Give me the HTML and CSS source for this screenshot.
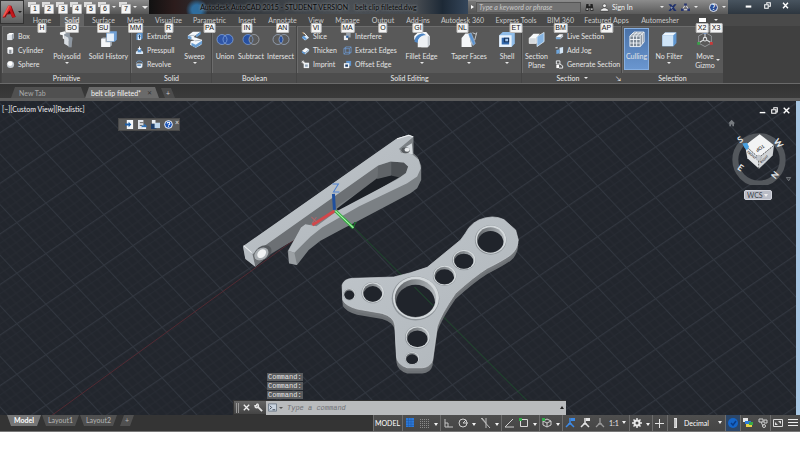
FILE: index.html
```html
<!DOCTYPE html>
<html lang="en">
<head>
  <meta charset="UTF-8">
  <meta name="viewport" content="width=device-width, initial-scale=1.0">
  <title>Autodesk AutoCAD 2015 - belt clip filleted.dwg</title>
  <link rel="stylesheet" href="styles.css">
</head>
<body>

  <!-- Shared icon shapes -->
  <svg class="defs" width="0" height="0" aria-hidden="true">
    <symbol id="i-box" viewBox="0 0 20 20"><path fill="#fff" d="M3 5l5-3h9v12l-4 4H3z"/><path fill="#dfe3e8" d="M3 6h10v12H3z"/><path fill="#9aa3ad" d="M13 6l4-4v12l-4 4z"/></symbol>
    <symbol id="i-cyl" viewBox="0 0 20 20"><path fill="#e9ecef" d="M3 5v10c0 4 13 4 13 0V5z"/><path fill="#8d949b" d="M7 8h5v9H7z"/><ellipse cx="9.500" cy="5" rx="6.500" ry="3" fill="#fff"/></symbol>
    <symbol id="i-sphere" viewBox="0 0 20 20"><circle cx="10" cy="10" r="8" fill="#c3c9d0"/><circle cx="9" cy="8" r="5.500" fill="#fff"/></symbol>
    <symbol id="i-extrude" viewBox="0 0 20 20"><path fill="#5d93cc" d="M3 5l4-3h10v12l-4 4H3z"/><path fill="#dbeaf8" d="M6 6h7v12H6z"/><path fill="#1c3c5e" d="M9 15V10H7l3-4 3 4h-2v5z"/></symbol>
    <symbol id="i-press" viewBox="0 0 20 20"><path fill="#dce9f6" d="M2 13l4-3h8l4 3v5H2z"/><path fill="#5d93cc" d="M6 5h8v9H6z"/><path fill="#fff" d="M9 1h2v4h3l-4 4-4-4h3z"/></symbol>
    <symbol id="i-revolve" viewBox="0 0 20 20"><path fill="#e3edf7" d="M3 8h14l-1 8c-3 3-9 3-12 0z"/><path fill="none" stroke="#6fa3d8" stroke-width="2" d="M3 6c2-5 11-5 14 0"/><path fill="#4a7fb8" d="M5 10h8v3H5z"/></symbol>
    <symbol id="i-slice" viewBox="0 0 20 20"><path fill="#dbe9f6" d="M2 12l10-5 6 6-9 6z"/><path fill="#5f9ad8" d="M5 8l8 7-3 3-8-5z"/><path stroke="#fff" stroke-width="2" d="M6 1l8 9"/><path stroke="#e0a860" stroke-width="2" d="M3 1l4 4"/></symbol>
    <symbol id="i-thick" viewBox="0 0 20 20"><path fill="#f4f7fa" d="M2 11l9-7 7 3-9 8z"/><path fill="#5f9ad8" d="M2 11l7 4v4l-7-4z"/><path fill="#b9d2ea" d="M9 15l9-8v4l-9 8z"/></symbol>
    <symbol id="i-imprint" viewBox="0 0 20 20"><path fill="#edf1f5" d="M6 6h12v12H6z"/><path fill="#8da0b4" d="M9 10h6v5H9z"/><path stroke="#fff" stroke-width="1.500" d="M5 1v8M1 5h8M2 2l6 6"/></symbol>
    <symbol id="i-interfere" viewBox="0 0 20 20"><path fill="#9aa2ab" d="M7 2h10v10H7z"/><path fill="#e8ebef" d="M2 8h9v10H2z"/><path fill="#2f5f9c" d="M7 8h5v5H7z"/></symbol>
    <symbol id="i-edges" viewBox="0 0 20 20"><path fill="none" stroke="#6fa0dc" stroke-width="1.500" d="M2 6h12v12H2zM6 2h12v12H6zM2 6l4-4M14 6l4-4M14 18l4-4M2 18l4-4"/></symbol>
    <symbol id="i-offset" viewBox="0 0 20 20"><path fill="#5f93cc" d="M7 2h11v11H7z"/><path fill="#f1f4f7" d="M2 7h12v11H2z"/><path fill="#1f3f68" d="M5 10h6v5H5z"/></symbol>
    <symbol id="i-live" viewBox="0 0 20 20"><path fill="#f4f6f8" d="M2 11l8-6h8l-6 7H2z"/><path fill="#7badde" d="M2 12h10v4H2z"/><path fill="#c5ccd4" d="M12 12l6-7v5l-6 6z"/></symbol>
    <symbol id="i-jog" viewBox="0 0 20 20"><path fill="#d5e6f6" d="M10 4l8-2v13l-8 3z"/><path fill="#6da5dc" d="M3 9l7-2v9l-7 2z"/><path fill="#fff" d="M1 3h5v2H1z"/></symbol>
    <symbol id="i-gen" viewBox="0 0 20 20"><path fill="none" stroke="#f2f4f6" stroke-width="2" d="M3 2h8v7H3zM11 9l6 4v5H9"/><path fill="#fff" d="M3 11h6v7H3z"/></symbol>

    <symbol id="b-poly" viewBox="0 0 48 48"><path fill="#f2f4f6" d="M4 4l14-3 6 3v12l12 6v24l-8-3V28L12 21v-9l-8-2z"/><path fill="#8d96a0" d="M18 1l14 5v9l8 4-4 27-8 0V24l-12-5V9l8-4z"/><path fill="#d8dde2" d="M16 13l12 6v24l-12-7z"/></symbol>
    <symbol id="b-history" viewBox="0 0 48 48"><path fill="#6f9fd4" d="M16 6l6-5h24v24l-6 5H16z"/><path fill="#e6f0fa" d="M18 7h20v22H18z"/><path fill="#a9b0b8" d="M2 22l5-4h11v12h14v10l-5 5H2z"/><path fill="#f5f7f9" d="M2 22h12v10h13v13H2z"/></symbol>
    <symbol id="b-sweep" viewBox="0 0 48 48"><path fill="#f4f8fc" d="M4 13L18 2h22L26 12l-6 5 24 8-2 14-16 8-16-8 2-10 12-3L4 22z"/><path fill="#6c9fd2" d="M4 13l10 3 0 8L4 21zM26 12l14-10v7L28 18zM14 33l12 6v8l-12-6zM26 39l18-12v9L26 47z"/><path fill="none" stroke="#3a4d60" d="M8 13l15-1M24 28l16-2"/></symbol>
    <symbol id="b-union" viewBox="0 0 54 36"><circle cx="18" cy="18" r="15" fill="#2f55a6"/><circle cx="36" cy="18" r="15" fill="#2f55a6"/><g fill="none" stroke="#8cb0ea" stroke-width="2"><circle cx="18" cy="18" r="15"/><circle cx="36" cy="18" r="15"/></g></symbol>
    <symbol id="b-sub" viewBox="0 0 54 36"><circle cx="18" cy="18" r="15" fill="#2750a0" stroke="#7ea6e6" stroke-width="2"/><circle cx="36" cy="18" r="15" fill="#5a5a5a" stroke="#b4bac2" stroke-width="2"/><path fill="none" stroke="#7ea6e6" stroke-width="2" d="M27 6a15 15 0 0 1 0 24"/></symbol>
    <symbol id="b-inter" viewBox="0 0 54 36"><path fill="#2750a0" d="M27 6a15 15 0 0 1 0 24 15 15 0 0 1 0-24"/><g fill="none" stroke="#a8b8d0" stroke-width="2"><circle cx="18" cy="18" r="15"/><circle cx="36" cy="18" r="15"/></g></symbol>
    <symbol id="b-fillet" viewBox="0 0 48 48"><path fill="#f6f8fa" d="M2 14L14 3h22l10 12v24l-6 7H22V32L2 24z"/><path fill="#4f86c4" d="M3 30C3 14 16 7 28 7l8 5C22 12 12 20 12 34z"/><path fill="#eef1f4" d="M12 34c0-14 10-22 24-22l4 4v30H12z"/><path fill="#c5cbd1" d="M40 15h6v24l-6 7z"/></symbol>
    <symbol id="b-taper" viewBox="0 0 48 48"><path fill="#f4f6f8" d="M3 20L14 7h10l8 38H3z"/><path fill="#b4bbc3" d="M24 7l10 30-2 8z"/><path fill="#5c93cf" stroke="#dcecfb" d="M22 9l8-4 12 30-6 6z"/><path fill="none" stroke="#eef2f6" stroke-width="2" d="M34 5l10 4M46 4L40 26"/></symbol>
    <symbol id="b-shell" viewBox="0 0 48 48"><path fill="#8fbce8" d="M2 12L12 3h34v32l-9 10H2z"/><path fill="#eaf3fc" d="M2 12h35v33H2z"/><path fill="#3268ac" d="M9 19h21v19H9z"/><path fill="#16345e" d="M15 19h15v13H15z"/><path fill="#a4c8ee" d="M19 22h8v7h-8z"/></symbol>
    <symbol id="b-plane" viewBox="0 0 48 48"><path fill="#f7f9fa" d="M2 20L14 8h18L22 20z"/><path fill="#d5dade" d="M2 20h20v15H2z"/><path fill="#86b4e2" stroke="#e8f3fd" stroke-width="2" d="M24 16L44 4v26L24 44z"/><path fill="none" stroke="#fff" stroke-width="2" d="M2 20h20v15H2z"/></symbol>
    <symbol id="b-cull" viewBox="0 0 48 48"><path fill="#7b8794" d="M4 14L16 3h28v28L33 44H4z"/><path fill="none" stroke="#f4f7fa" stroke-width="2.500" d="M4 14h29v30H4zM4 14L16 3h28v28L33 44M33 14L44 3M14 14v30M23 14v30M4 24h29M4 34h29M10 8h29v28M24 3L14 14M34 3L23 14"/></symbol>
    <symbol id="b-filter" viewBox="0 0 48 48"><path fill="#5e95cf" d="M5 12l8-8h32v30l-8 9H5z"/><path fill="#cfe4f7" d="M5 12h31v31H5z"/><path fill="#eef6fd" d="M5 12l8-8h32l-9 8z"/></symbol>
    <symbol id="b-gizmo" viewBox="0 0 48 48"><path fill="none" stroke="#a9adb1" stroke-width="2" d="M24 4l18 10v20L24 44 6 34V14z"/><path fill="none" stroke="#d9dcdf" stroke-width="3" d="M24 4v14M6 34l12-8M42 34l-12-8"/><circle cx="24" cy="23" r="5" fill="none" stroke="#dfe2e4" stroke-width="3"/><path fill="#4e86d6" d="M19 7l5-6 5 6z"/><path fill="#3aa04a" d="M2 31h8v8H2z"/><path fill="#c83a3a" d="M38 31h8v8h-8z"/></symbol>

    <symbol id="s-grid" viewBox="0 0 10 10"><path fill="#2d79d8" d="M1 0h8v9H1z"/><path stroke="#1c56a4" stroke-width=".5" d="M3.500 0v9M6 0v9M1 2.500h8M1 5h8M1 7.500h8"/></symbol>
    <symbol id="s-dots" viewBox="0 0 10 10"><path stroke="#8a8a8a" stroke-dasharray="1 1" d="M0 1.500h10M0 3.500h10M0 5.500h10M0 7.500h10M0 9.500h10"/></symbol>
    <symbol id="s-ortho" viewBox="0 0 10 10"><path fill="none" stroke="#c4c4c4" d="M2 1v8h8M2 5h3v4"/></symbol>
    <symbol id="s-polar" viewBox="0 0 10 10"><circle cx="5" cy="5" r="4" fill="none" stroke="#cfcfcf"/><path fill="none" stroke="#cfcfcf" d="M5 5h5M5 5l3-3"/></symbol>
    <symbol id="s-iso" viewBox="0 0 10 10"><path stroke="#bdbdbd" d="M0 0l9 10M5 0v10M1 0l4 5"/></symbol>
    <symbol id="s-track" viewBox="0 0 10 10"><path fill="none" stroke="#cfcfcf" d="M9 1L1 9h9"/></symbol>
    <symbol id="s-snap" viewBox="0 0 10 10"><path fill="none" stroke="#d6d6d6" d="M1.500 1.500h7v7h-7z"/><path fill="#30a848" d="M0 0h3v3H0z"/></symbol>
    <symbol id="s-cube" viewBox="0 0 10 10"><path fill="none" stroke="#cfcfcf" d="M5 1l4 2v4L5 9 1 7V3zM1 3l4 2 4-2M5 5v4"/><path fill="#30a848" d="M0 0h3v3H0z"/></symbol>
    <symbol id="s-man" viewBox="0 0 10 10"><path fill="none" stroke="currentColor" stroke-width="1.500" d="M5 0v5L1 9M5 5l4 4M3 6h4"/><path fill="currentColor" d="M6 0h4v3H6z"/></symbol>
    <symbol id="s-man2" viewBox="0 0 10 10"><path fill="none" stroke="currentColor" stroke-width="1.300" d="M5 0v5L1 9M5 5l4 4M3 6h4"/></symbol>
    <symbol id="s-gear" viewBox="0 0 10 10"><circle cx="5" cy="5" r="2.500" fill="none" stroke="#e8e8e8" stroke-width="2"/><path stroke="#e8e8e8" stroke-width="1.500" d="M5 0v2M5 8v2M0 5h2M8 5h2M1.500 1.500l1.500 1.500M7 7l1.500 1.500M8.500 1.500L7 3M3 7L1.500 8.500"/></symbol>
    <symbol id="s-plus" viewBox="0 0 10 10"><path stroke="#e2e2e2" d="M4.500 1v9M0 5.500h9"/></symbol>
    <symbol id="s-ruler" viewBox="0 0 10 10"><path fill="#e0e0e0" d="M4 0h3v10H4z"/><path stroke="#777" stroke-width=".5" d="M4 2h2M4 4h2M4 6h2M4 8h2"/></symbol>
    <symbol id="s-hw" viewBox="0 0 10 10"><circle cx="5" cy="5" r="5" fill="#1565c8"/><path fill="none" stroke="#0b3c86" stroke-width="1.500" d="M3 5l2 2 3-4"/></symbol>
    <symbol id="s-iso2" viewBox="0 0 10 10"><path fill="#e6e6e6" d="M0 0h5v4H0z"/><path fill="#2d79d8" d="M2 3h6v3H2z"/><path fill="#e8d048" d="M3 6h6v3H3z"/><path fill="#38a848" d="M6 4h4v3H6z"/></symbol>
    <symbol id="s-obj" viewBox="0 0 10 10"><path fill="none" stroke="#d0d0d0" d="M1 1h4v3H1zM6 2h3v3H6zM3 4l2 4"/><circle cx="6" cy="8" r="1.500" fill="none" stroke="#d0d0d0"/></symbol>
    <symbol id="s-clean" viewBox="0 0 10 10"><path fill="none" stroke="#dadada" d="M.5 1.500h9v7h-9z"/><path fill="#dadada" d="M5 3h3v3zM2 4v3h3z"/></symbol>
    <symbol id="s-menu" viewBox="0 0 10 10"><path stroke="#eee" d="M0 1.500h10M0 4.500h10M0 7.500h10"/></symbol>
  </svg>

  <div class="app">

    <!-- Title bar and ribbon tabs -->
    <header class="header">
      <button class="app-button" aria-label="Application menu">
        <svg viewBox="0 0 48 44"><path fill="#8f0d10" d="M20 2h10l14 36-11 2-5-11-12 1-4 9-10 1z"/><path fill="#e3262b" d="M20 2h8l3 12-18 14-9 10H2z"/><path fill="#f05a50" d="M20 2h5L8 36H2z"/><path fill="#c5171c" d="M28 10l14 28-9 1-10-20z"/><path fill="#3a0d0e" d="M23 17l5 9-9 1z"/></svg>
        <span class="caret"></span>
      </button>
      <div class="header-main">
        <div class="titlebar">
          <div class="quick-access">
            <button aria-label="New"><kbd>1</kbd></button>
            <button aria-label="Open"><kbd>2</kbd></button>
            <button aria-label="Save"><kbd>3</kbd></button>
            <button aria-label="Save as"><kbd>4</kbd></button>
            <button aria-label="Plot"><kbd>5</kbd></button>
            <button aria-label="Undo"><kbd>6</kbd></button>
            <span class="caret"></span>
            <button aria-label="Redo"><kbd>7</kbd></button>
            <span class="caret"></span>
            <span class="caret customize"></span>
          </div>
          <div class="window-title"><span>Autodesk AutoCAD 2015 - STUDENT VERSION</span><span>belt clip filleted.dwg</span></div>
          <div class="info-center">
            <button class="info-arrow" aria-label="Collapse search"></button>
            <input class="search" type="text" placeholder="Type a keyword or phrase" aria-label="Search">
            <svg class="info-icon" viewBox="0 0 20 20"><path fill="#222" d="M3 2h5v5h4V2h5l2 15h-7v-6H8v6H1z"/><path fill="#ddd" d="M3 12h4v3H3zM13 12h4v3h-4z"/></svg>
            <button class="sign-in"><svg class="info-icon" viewBox="0 0 20 20"><circle cx="10" cy="6" r="4" fill="#eee" stroke="#222"/><path fill="#eee" stroke="#222" d="M1 18c0-6 5-5 7-7h4c2 2 7 1 7 7z"/></svg>Sign In</button>
            <span class="caret"></span>
            <svg class="info-icon" viewBox="0 0 20 20"><path fill="#1d2f6b" d="M1 3h6l3 4 4-4h5l-6 7 6 8h-6l-3-5-4 5H1l6-8z"/><path fill="#dce4f2" d="M8 8l2 2-3 4z"/></svg>
            <svg class="info-icon" viewBox="0 0 20 20"><path fill="none" stroke="#e8e8f4" stroke-width="2" d="M10 3L3 15h14z"/><path fill="#27356e" d="M7 1h6v5H7zM0 12h6v6H0zM14 12h6v6h-6z"/></svg>
            <span class="caret"></span>
            <button class="help" aria-label="Help">?</button>
            <span class="caret"></span>
          </div>
          <div class="window-controls">
            <button aria-label="Minimize"><svg viewBox="0 0 10 10"><path fill="#fff" d="M1 5h8v3H1z"/></svg></button>
            <button aria-label="Restore"><svg viewBox="0 0 10 10"><path fill="none" stroke="#fff" stroke-width="1.500" d="M1 4h5v5H1zM4 3V1h5v5H7"/></svg></button>
            <button aria-label="Close"><svg viewBox="0 0 10 10"><path stroke="#fff" stroke-width="2" d="M1.500 1l7 8M8.500 1l-7 8"/></svg></button>
          </div>
        </div>
        <nav class="ribbon-tabs">
          <a href="#">Home<kbd>H</kbd></a>
          <a href="#" class="active">Solid<kbd>SO</kbd></a>
          <a href="#">Surface<kbd>SU</kbd></a>
          <a href="#">Mesh<kbd>MM</kbd></a>
          <a href="#">Visualize<kbd>R</kbd></a>
          <a href="#">Parametric<kbd>PA</kbd></a>
          <a href="#">Insert<kbd>IN</kbd></a>
          <a href="#">Annotate<kbd>AN</kbd></a>
          <a href="#">View<kbd>VI</kbd></a>
          <a href="#">Manage<kbd>MA</kbd></a>
          <a href="#">Output<kbd>O</kbd></a>
          <a href="#">Add-ins<kbd>GI</kbd></a>
          <a href="#">Autodesk 360<kbd>NL</kbd></a>
          <a href="#">Express Tools<kbd>ET</kbd></a>
          <a href="#">BIM 360<kbd>BM</kbd></a>
          <a href="#">Featured Apps<kbd>AP</kbd></a>
          <a href="#">Automesher</a>
          <button class="ribbon-state first" aria-label="Minimize ribbon"><i></i><kbd>X2</kbd></button>
          <button class="ribbon-state" aria-label="Ribbon options"><span class="caret"></span><kbd>X3</kbd></button>
        </nav>
      </div>
    </header>

    <!-- Ribbon panels -->
    <div class="ribbon">
      <section class="panel primitive">
        <div class="tools">
          <div class="list">
            <button><svg><use href="#i-box"/></svg>Box</button>
            <button><svg><use href="#i-cyl"/></svg>Cylinder</button>
            <button><svg><use href="#i-sphere"/></svg>Sphere</button>
          </div>
          <button class="big"><svg><use href="#b-poly"/></svg>Polysolid<span class="caret"></span></button>
          <button class="big"><svg><use href="#b-history"/></svg>Solid History</button>
        </div>
        <h2>Primitive</h2>
      </section>
      <section class="panel solid">
        <div class="tools">
          <div class="list">
            <button><svg><use href="#i-extrude"/></svg>Extrude</button>
            <button><svg><use href="#i-press"/></svg>Presspull</button>
            <button><svg><use href="#i-revolve"/></svg>Revolve</button>
          </div>
          <button class="big"><svg><use href="#b-sweep"/></svg>Sweep<span class="caret"></span></button>
        </div>
        <h2>Solid</h2>
      </section>
      <section class="panel boolean">
        <div class="tools">
          <button class="big"><svg><use href="#b-union"/></svg>Union</button>
          <button class="big"><svg><use href="#b-sub"/></svg>Subtract</button>
          <button class="big"><svg><use href="#b-inter"/></svg>Intersect</button>
        </div>
        <h2>Boolean</h2>
      </section>
      <section class="panel editing">
        <div class="tools">
          <div class="list">
            <button><svg><use href="#i-slice"/></svg>Slice</button>
            <button><svg><use href="#i-thick"/></svg>Thicken</button>
            <button><svg><use href="#i-imprint"/></svg>Imprint</button>
          </div>
          <div class="list">
            <button><svg><use href="#i-interfere"/></svg>Interfere</button>
            <button><svg><use href="#i-edges"/></svg>Extract Edges</button>
            <button><svg><use href="#i-offset"/></svg>Offset Edge</button>
          </div>
          <button class="big"><svg><use href="#b-fillet"/></svg>Fillet Edge<span class="caret"></span></button>
          <button class="big"><svg><use href="#b-taper"/></svg>Taper Faces<span class="caret"></span></button>
          <button class="big"><svg><use href="#b-shell"/></svg>Shell<span class="caret"></span></button>
        </div>
        <h2>Solid Editing</h2>
      </section>
      <section class="panel section">
        <div class="tools">
          <button class="big"><svg><use href="#b-plane"/></svg>Section<br>Plane</button>
          <div class="list">
            <button><svg><use href="#i-live"/></svg>Live Section</button>
            <button><svg><use href="#i-jog"/></svg>Add Jog</button>
            <button><svg><use href="#i-gen"/></svg>Generate Section</button>
          </div>
        </div>
        <h2>Section <span class="caret"></span><button class="launcher" aria-label="Section settings">&#8600;</button></h2>
      </section>
      <section class="panel selection">
        <div class="tools">
          <button class="big pressed"><svg><use href="#b-cull"/></svg>Culling</button>
          <button class="big"><svg><use href="#b-filter"/></svg>No Filter<span class="caret"></span></button>
          <button class="big"><svg><use href="#b-gizmo"/></svg>Move<br>Gizmo<span class="caret side"></span></button>
        </div>
        <h2>Selection</h2>
      </section>
    </div>

    <!-- Open drawings -->
    <nav class="file-tabs">
      <a href="#" class="file-tab">New Tab</a>
      <a href="#" class="file-tab current">belt clip filleted*<span class="close">&#10005;</span></a>
      <button class="add-tab" aria-label="New drawing">+</button>
    </nav>

    <!-- Drawing area -->
    <main class="viewport">
      <svg class="drawing" viewBox="0 101 795 314" preserveAspectRatio="xMidYMid slice" role="img" aria-label="Belt clip model">
        <defs>
          <pattern id="grid" width="10" height="10" patternUnits="userSpaceOnUse" patternTransform="matrix(2.9 -1.95 2.9 3.1 335 210)">
            <path fill="none" stroke="#282c34" stroke-width=".2" d="M2 0v10M4 0v10M6 0v10M8 0v10M0 2h10M0 4h10M0 6h10M0 8h10"/>
            <path fill="none" stroke="#31363f" stroke-width=".6" d="M0 0v10M0 0h10"/>
          </pattern>
          <linearGradient id="steel" x1="0" y1="0" x2="1" y2="1">
            <stop offset="0" stop-color="#c1c7cc"/>
            <stop offset="1" stop-color="#aeb4b9"/>
          </linearGradient>
          <linearGradient id="wall" x1="0" y1="0" x2="1" y2="0">
            <stop offset="0" stop-color="#606468"/>
            <stop offset=".6" stop-color="#8f9498"/>
            <stop offset="1" stop-color="#b4b9bd"/>
          </linearGradient>
          <path id="plate" d="M35 240Q40 222 65 220L190 216Q240 205 290 187L390 105Q405 85 415 68Q440 38 485 36Q505 36 520 44L555 75L563 105Q560 135 540 150Q520 165 470 190Q430 215 375 265Q330 330 320 365Q315 400 306 465Q300 486 275 488H230Q200 478 198 455L193 360Q190 335 155 325L80 312Q45 302 37 285Z"/>
          <clipPath id="bore"><circle r=".93"/></clipPath>
          <g id="hole">
            <circle r="1.100" fill="#8f959a"/>
            <circle r="1.060" cx=".02" cy="-.03" fill="#d3d8db"/>
            <circle r=".95" fill="url(#wall)"/>
            <g clip-path="url(#bore)"><circle r=".9" cy=".22" fill="#20242b"/></g>
          </g>
        </defs>
        <rect y="101" width="795" height="314" fill="#22262d"/>
        <rect y="101" width="795" height="314" fill="url(#grid)"/>
        <path stroke="#5e2a33" stroke-width=".8" d="M52 415L335 210"/>

        <!-- clip, side view -->
        <g transform="translate(230 125) scale(.3333)">
          <path fill="#7b8084" d="M38 365L498 42L535 30L549 35V85L562 98L572 122V165L560 190L540 205L380 290L340 310L270 347L235 375L200 420L176 415L172 378L212 308L190 345L120 385L75 425L45 400Z"/>
          <path fill="#6c7074" d="M66 388L443 122L440 165L325 240L300 268L240 298L212 308L190 345L120 388L75 425Z"/>
          <path fill="#b7bdc2" d="M38 362L66 385L75 425L45 402Z"/>
          <path fill="#1c2026" d="M318 252L440 160L482 150L510 155L330 262Z"/>
          <path fill="#606468" d="M443 122L482 110V152L440 162Z"/>
          <path fill="#4c5054" d="M482 110L520 113L533 125L528 142L508 158L482 152Z"/>
          <path fill="url(#steel)" fill-rule="evenodd" d="M40 362L498 42L535 30L549 36L506 72L512 84L545 88L565 105L571 130L560 155L530 175L385 245L275 308L240 335L192 383L174 377L212 308L225 298L258 304L320 258L500 163L526 145L533 125L520 113L480 110L443 122L66 388Z"/>
          <path fill="#9ba0a4" d="M174 377L192 383L200 420L176 415Z"/>
          <ellipse cx="97" cy="384" rx="29" ry="20" fill="#565a5e" transform="rotate(-35 97 384)"/>
          <ellipse cx="93" cy="387" rx="23" ry="17" fill="#a9aeb2" transform="rotate(-35 93 387)"/>
          <ellipse cx="94" cy="386" rx="15" ry="11" fill="#f0f2f3" transform="rotate(-45 94 386)"/>
          <path fill="#d5dade" d="M510 76L544 55L547 88L515 84Z"/>
          <ellipse cx="525" cy="76" rx="13" ry="9" fill="#565a5e"/>
          <ellipse cx="530" cy="75" rx="8" ry="6" fill="#e6e9eb"/>
          <path fill="none" stroke="#eceff1" stroke-width="3" d="M40 362L64 383M500 42L535 31L548 36"/>
        </g>

        <!-- clip, flat plate -->
        <path stroke="#1d5a2c" stroke-width=".8" d="M345 219L541 415"/>
        <g transform="translate(330 205) scale(.3333)">
          <use href="#plate" y="17" fill="#6d7175"/>
          <use href="#plate" y="9" fill="#74787c"/>
          <use href="#plate" fill="url(#steel)" stroke="#cbd0d4" stroke-width="2"/>
          <use href="#hole" transform="translate(57 268) scale(17 17)"/>
          <use href="#hole" transform="translate(127 263) scale(31 29)"/>
          <use href="#hole" transform="translate(255 280) scale(65 60)"/>
          <use href="#hole" transform="translate(342 212) scale(32 28)"/>
          <use href="#hole" transform="translate(400 165) scale(32 28)"/>
          <use href="#hole" transform="translate(480 105) scale(43 40)"/>
          <use href="#hole" transform="translate(261 397) scale(34 31)"/>
          <use href="#hole" transform="translate(245 460) scale(20 18)"/>
          <path stroke="#1f6b30" stroke-width="2" d="M252 246L308 302"/>
        </g>

        <!-- UCS icon -->
        <path stroke="#1f4f9e" stroke-width="3" d="M334 210L333 194"/>
        <path stroke="#d2474b" stroke-width="3" d="M334 211L312 225"/>
        <path stroke="#2fae3c" stroke-width="3" d="M335 211L353 228"/>
        <path stroke="#b4f5b4" d="M335 211L353 228"/>
        <path fill="none" stroke="#4a7ed0" d="M332 184h6l-5 8h6"/>
        <path fill="none" stroke="#b06468" d="M311 217l5 5M316 217l-4 6"/>
        <path fill="none" stroke="#1f6b30" d="M353 226l3-4M354 222v4"/>
      </svg>

      <div class="view-label">[&#8211;][Custom View][Realistic]</div>

      <div class="mini-toolbar">
        <button aria-label="Insert"><svg viewBox="0 0 10 10"><path fill="#f4f6f8" d="M2 0h7v10H2z"/><path fill="#1d5fa8" d="M0 4h4V2l3 3-3 3V6H0z"/></svg></button>
        <button aria-label="Export"><svg viewBox="0 0 10 10"><path fill="#dfe4ea" d="M0 0h6v10H0z"/><path fill="none" stroke="#555" d="M2 3h4M2 6h3"/><path fill="#2a70b8" d="M4 6h3V4l3 3-3 3V8H4z"/><path fill="#eef1f5" d="M5 8h4v2H5z"/></svg></button>
        <button aria-label="Compare"><svg viewBox="0 0 10 10"><path fill="#1d3d68" d="M0 4h6v6H0z"/><path fill="#bcd6ee" d="M4 3h6v6H4z"/><path fill="#e9eef4" d="M1 0h4v4H1z"/></svg></button>
        <button aria-label="Help"><svg viewBox="0 0 10 10"><circle cx="5" cy="5" r="4.300" fill="#1c55b8" stroke="#fff"/><path fill="none" stroke="#fff" stroke-width="1.200" d="M3.500 4c0-2 3-2 3 0 0 1-1.500 1-1.500 2M5 7v1"/></svg></button>
        <button class="mini-close" aria-label="Close toolbar">&#215;</button>
      </div>

      <div class="doc-controls">
        <button aria-label="Minimize drawing"><svg viewBox="0 0 10 10"><path fill="#fff" d="M1 7h8v2H1z"/></svg></button>
        <button aria-label="Restore drawing"><svg viewBox="0 0 10 10"><path fill="none" stroke="#fff" stroke-width="1.500" d="M1 4h6v5H1zM4 3V1h5v6H7"/></svg></button>
        <button aria-label="Close drawing"><svg viewBox="0 0 10 10"><path stroke="#fff" stroke-width="2" d="M1 1l8 8M9 1L1 9"/></svg></button>
      </div>

      <div class="view-cube">
        <svg viewBox="100 60 210 200" role="img" aria-label="View cube">
          <path fill="#777b80" d="M113 75l10-10 10 10-3 1v8h-5v-5h-4v5h-5v-8z"/>
          <circle cx="205" cy="185" r="71" fill="none" stroke="#53575c" stroke-width="18"/>
          <path fill="#f2f3f4" d="M163 141L207 108L250 141L204 179Z"/>
          <path fill="#e2e4e6" d="M163 141L204 179L205 212L170 180Z"/>
          <path fill="#cfd2d5" d="M250 141L204 179L205 212L246 172Z"/>
          <path fill="none" stroke="#333" stroke-width="2" stroke-dasharray="5 4" d="M163 141L204 179L250 141M204 179V212"/>
          <circle cx="204" cy="179" r="8" fill="#c3c7cc" stroke="#888"/>
          <path fill="#49a0e0" d="M155 136l14-2 6 12-6 10-8-8z"/>
          <g class="cube-text">
            <text transform="translate(217 138) rotate(145)">TOP</text>
            <text transform="translate(168 162) rotate(42)" class="face">FRONT</text>
            <text transform="translate(212 196) rotate(-42)" class="face">RIGHT</text>
            <text class="compass" transform="translate(148 136) rotate(-35)">S</text>
            <text class="compass" transform="translate(248 130) rotate(52)">W</text>
            <text class="compass" transform="translate(138 212) rotate(35)">E</text>
            <text class="compass" transform="translate(254 244) rotate(-50)">N</text>
          </g>
          <path fill="#3a3e44" stroke="#8b8f94" stroke-width="2" d="M287 238h13l-6 10z"/>
        </svg>
        <label class="wcs"><select aria-label="Coordinate system"><option>WCS</option></select></label>
      </div>

      <div class="command">
        <div class="history"><span>Command:</span><span>Command:</span><span>Command:</span></div>
        <div class="command-line">
          <span class="grip"></span>
          <button aria-label="Close command line"><svg viewBox="0 0 10 10"><path stroke="#eee" stroke-width="1.500" d="M2 2l6 6M8 2L2 8"/></svg></button>
          <button aria-label="Customize"><svg viewBox="0 0 10 10"><path stroke="#e4e4e4" stroke-width="2" d="M4 4l5 5"/><path fill="none" stroke="#e4e4e4" stroke-width="1.500" d="M3 1v2H1c0 3 4 3 4 0 0-1-1-2-2-2"/></svg></button>
          <div class="prompt">
            <svg viewBox="0 0 10 10"><path fill="#c9d3df" stroke="#6a7684" d="M.5 1h9v8h-9z"/><path fill="none" stroke="#333b46" d="M2 3l2 2-2 2M5 7.500h3"/></svg>
            <span class="caret"></span>
            <input type="text" placeholder="Type a command" aria-label="Command">
            <button class="expand" aria-label="Command history"></button>
          </div>
        </div>
      </div>
    </main>

    <!-- Layout tabs and status bar -->
    <footer class="footer">
      <nav class="layout-tabs">
        <a href="#" class="current">Model</a>
        <a href="#">Layout1</a>
        <a href="#">Layout2</a>
        <button aria-label="New layout">+</button>
      </nav>
      <div class="status">
        <div class="group"><button class="model">MODEL</button></div>
        <div class="group">
          <button class="st" aria-label="Grid"><svg><use href="#s-grid"/></svg></button>
          <button class="st" aria-label="Snap"><svg><use href="#s-dots"/></svg></button>
          <button class="drop" aria-label="Snap settings"></button>
        </div>
        <div class="group">
          <button class="st" aria-label="Ortho"><svg><use href="#s-ortho"/></svg></button>
          <button class="st" aria-label="Polar"><svg><use href="#s-polar"/></svg></button>
          <button class="drop" aria-label="Polar settings"></button>
          <button class="st" aria-label="Isodraft"><svg><use href="#s-iso"/></svg></button>
          <button class="drop" aria-label="Isodraft settings"></button>
        </div>
        <div class="group">
          <button class="st" aria-label="Object tracking"><svg><use href="#s-track"/></svg></button>
          <button class="st" aria-label="Object snap"><svg><use href="#s-snap"/></svg></button>
          <button class="drop" aria-label="Object snap settings"></button>
        </div>
        <div class="group">
          <button class="st" aria-label="3D object snap"><svg><use href="#s-cube"/></svg></button>
          <button class="drop" aria-label="3D snap settings"></button>
        </div>
        <div class="group">
          <button class="st on" aria-label="Annotation visibility"><svg><use href="#s-man"/></svg></button>
          <button class="st" aria-label="Auto scale"><svg><use href="#s-man"/></svg></button>
          <button class="st dim" aria-label="Annotation scale"><svg><use href="#s-man2"/></svg></button>
          <label class="pick scale"><select aria-label="Scale"><option>1:1</option></select></label>
        </div>
        <div class="group">
          <button class="st" aria-label="Workspace"><svg><use href="#s-gear"/></svg></button>
          <button class="drop" aria-label="Workspace menu"></button>
        </div>
        <div class="group"><button class="st" aria-label="Annotation monitor"><svg><use href="#s-plus"/></svg></button></div>
        <div class="group">
          <button class="st" aria-label="Units"><svg><use href="#s-ruler"/></svg></button>
          <label class="pick units"><select aria-label="Drawing units"><option>Decimal</option></select></label>
        </div>
        <div class="group hw"><button class="st" aria-label="Hardware acceleration"><svg><use href="#s-hw"/></svg></button></div>
        <div class="group">
          <button class="st" aria-label="Quick properties"><svg><use href="#s-iso2"/></svg></button>
          <button class="st" aria-label="Isolate objects"><svg><use href="#s-obj"/></svg></button>
        </div>
        <div class="group">
          <button class="st" aria-label="Clean screen"><svg><use href="#s-clean"/></svg></button>
          <button class="st" aria-label="Customization"><svg><use href="#s-menu"/></svg></button>
        </div>
      </div>
    </footer>
  </div>

</body>
</html>
```
FILE: styles.css
```css
* {
  box-sizing: border-box;
}
body {
  margin: 0;
  background-color: #fff;
  color: #e4e4e4;
  font-family: Lato, "Liberation Sans", sans-serif;
  font-size: 7px;
  line-height: 10px;
}
button, input, select {
  font: inherit;
  color: inherit;
  background: none;
  border: none;
  border-radius: 0;
  margin: 0;
  padding: 0;
  min-width: 0;
}
a {
  color: inherit;
  text-decoration: none;
}
h2 {
  margin: 0;
  font-size: 7px;
  font-weight: normal;
}
kbd {
  font-family: "Liberation Sans", sans-serif;
  font-size: 7px;
  line-height: 8px;
  color: #111;
  background-color: #f4f4f4;
  border: 1px solid #bbb;
  border-radius: 1px;
  padding: 0 1px;
}
.defs {
  position: absolute;
}
.app {
  display: flex;
  flex-direction: column;
  height: 96vh;
  background-color: #333;
}
.caret {
  display: block;
  width: 0;
  border: 2px solid transparent;
  border-top-color: #e8e8e8;
  border-bottom: none;
}

/* Header */
.header {
  display: flex;
  height: 26px;
  background-color: #494949;
}
.app-button {
  display: flex;
  align-items: center;
  width: 24px;
  height: 24px;
  padding: 1px;
  background: linear-gradient(#9a9a9a, #5e5e5e);
  border: 1px solid #333;
}
.app-button svg {
  width: 15px;
  height: 18px;
}
.app-button .caret {
  margin-left: 1px;
  border-top-color: #222;
}
.header-main {
  flex: 1;
  min-width: 0;
}
.titlebar {
  display: flex;
  height: 14px;
  background-color: #24282d;
}
.quick-access {
  display: flex;
  align-items: center;
  gap: 3px;
  width: 125px;
  padding-left: 4px;
  background: linear-gradient(#8a8a8a, #565656);
}
.quick-access button {
  display: flex;
  width: 11px;
  height: 13px;
  padding: 3px 0 0 2px;
  background: linear-gradient(#dcdcdc, #dcdcdc) 0 1px / 8px 5px no-repeat;
}
.quick-access kbd {
  padding: 0 2px;
}
.quick-access .customize {
  margin-left: 2px;
  border-width: 3px;
  border-bottom: none;
}
.window-title {
  display: flex;
  flex: 1;
  align-items: center;
  justify-content: center;
  gap: 7px;
  color: #050505;
  white-space: nowrap;
  text-shadow: 0 0 3px #858a8f, 0 0 3px #858a8f;
  background: radial-gradient(circle at 15% 70%, #2f6d9e 0, #2f6d9e 5px, transparent 11px), linear-gradient(90deg, #111 0, #2c1c1c 8%, #2b3036 20%, #4a4f54 60%, #454a50 84%, #1d2936 92%, #35465a);
}
.info-center {
  display: flex;
  align-items: center;
  gap: 4px;
  width: 260px;
  background: linear-gradient(#8c8c8c, #595959);
}
.info-arrow {
  width: 8px;
  height: 12px;
  background: linear-gradient(#777, #555);
}
.info-arrow::before {
  content: "";
  display: block;
  margin-left: 3px;
  width: 0;
  border: 2px solid transparent;
  border-left: 3px solid #fff;
  border-right: none;
}
.search {
  width: 105px;
  margin-left: -4px;
  height: 11px;
  padding-left: 2px;
  background-color: #727272;
  border: 1px solid #555;
}
.search::placeholder {
  color: #c9c9c9;
  font-style: italic;
  opacity: 1;
}
.info-icon {
  width: 9px;
  height: 9px;
}
.sign-in {
  display: flex;
  align-items: center;
  gap: 3px;
  width: 56px;
  margin-left: 2px;
  color: #f2f2f2;
}
.help {
  width: 9px;
  height: 9px;
  margin-left: 7px;
  line-height: 7px;
  font-weight: bold;
  color: #fff;
  background-color: #2b4d94;
  border: 1px solid #e4e8f0;
  border-radius: 50%;
}
.window-controls {
  display: flex;
  justify-content: space-between;
  width: 72px;
  padding: 0 11px 4px 17px;
  background: linear-gradient(#48545f, #2d363f);
}
.window-controls button {
  display: flex;
  align-items: center;
}
.window-controls svg {
  width: 7px;
  height: 7px;
}
.ribbon-tabs {
  display: grid;
  grid-template-columns: 32px 28px 35px 29px 37px 45px 30px 41px 26px 37px 34px 36px 53px 54px 35px 57px 50px 24px 14px;
  height: 12px;
  padding-left: 2px;
  line-height: 12px;
  text-align: center;
  white-space: nowrap;
  color: #c9c9c9;
  background-color: #494949;
}
.ribbon-tabs a, .ribbon-state {
  position: relative;
}
.ribbon-tabs .active {
  color: #f0f0f0;
  background: linear-gradient(#646464, #646464) center / 24px 12px no-repeat;
}
.ribbon-tabs kbd {
  position: absolute;
  z-index: 2;
  top: 9px;
  left: 50%;
  transform: translateX(-50%);
}
.ribbon-state {
  display: flex;
  align-items: center;
  justify-content: center;
}
.first {
  margin-left: 10px;
}
.ribbon-state i {
  width: 7px;
  height: 4px;
  background-color: #fff;
}

/* Ribbon */
.ribbon {
  display: flex;
  height: 58px;
  padding-left: 2px;
  background-color: #404040;
  border-bottom: 1px solid #6a6a6a;
}
.panel {
  display: flex;
  flex-direction: column;
  background-color: #595959;
  box-shadow: inset 1px 1px #6c6c6c, -1px 0 #454545;
}
.panel h2 {
  display: flex;
  align-items: center;
  justify-content: center;
  gap: 4px;
  height: 10px;
  color: #ececec;
  background-color: #4d4d4d;
}
.tools {
  display: grid;
  flex: 1;
}
.primitive .tools {
  grid-template-columns: 46px 38px 45px;
}
.solid .tools {
  grid-template-columns: 46px 35px;
}
.boolean .tools {
  grid-template-columns: 26px 26px 33px;
}
.editing .tools {
  grid-template-columns: 42px 58px 49px 46px 30px;
}
.section .tools {
  grid-template-columns: 29px 71px;
}
.selection .tools {
  grid-template-columns: 29px 36px 36px;
}
.list {
  display: flex;
  flex-direction: column;
  padding: 3px 0 0 4px;
}
.list button {
  display: flex;
  align-items: center;
  gap: 3px;
  height: 14px;
  white-space: nowrap;
}
.list svg {
  width: 9px;
  height: 9px;
}
.big {
  position: relative;
  display: flex;
  flex-direction: column;
  align-items: center;
  padding-top: 5px;
  line-height: 9px;
  white-space: nowrap;
}
.big svg {
  width: 18px;
  height: 17px;
  margin-bottom: 4px;
}
.big .caret {
  margin-top: 1px;
}
.big .side {
  position: absolute;
  right: 3px;
  bottom: 12px;
}
.pressed {
  margin: 2px 2px 3px;
  padding-top: 2px;
  background: linear-gradient(#4a72a8, #6a96cf);
  border: 1px solid #86aee0;
}
.section h2 {
  position: relative;
}
.launcher {
  position: absolute;
  right: 1px;
  line-height: 8px;
}

/* File tabs */
.file-tabs {
  display: flex;
  align-items: flex-end;
  height: 17px;
  padding: 0 0 3px 11px;
  background: linear-gradient(#333, #3a3a3a 14px, #5c5c5c 14px);
}
.file-tab {
  display: flex;
  align-items: center;
  justify-content: space-between;
  width: 74px;
  height: 11px;
  padding: 0 7px 0 8px;
  color: #a8a8a8;
  background-color: #505050;
  clip-path: polygon(4px 0, 70px 0, 100% 100%, 0 100%);
}
.file-tab.current {
  color: #f2f2f2;
  padding-left: 6px;
  background-color: #6a6a6a;
  white-space: nowrap;
}
.close {
  font-size: 6px;
  color: #333;
}
.add-tab {
  width: 14px;
  height: 10px;
  margin-left: 2px;
  color: #ccc;
  line-height: 9px;
  background-color: #4c4c4c;
  clip-path: polygon(0 0, 10px 0, 100% 100%, 4px 100%);
}

/* Drawing area */
.viewport {
  position: relative;
  flex: 1;
  min-height: 0;
  overflow: hidden;
  border-right: 4px solid #a9c8e4;
}
.drawing {
  display: block;
  width: 100%;
  height: 100%;
}
.view-label {
  position: absolute;
  top: 3px;
  left: 2px;
  color: #f0f0f0;
}
.mini-toolbar {
  position: absolute;
  top: 17px;
  left: 118px;
  display: flex;
  align-items: center;
  gap: 4px;
  height: 13px;
  padding-left: 6px;
  background-color: #5a5a5a;
  border: 1px solid #484848;
}
.mini-toolbar svg {
  display: block;
  width: 9px;
  height: 9px;
}
.mini-close {
  align-self: flex-start;
  margin-left: -2px;
  line-height: 6px;
}
.doc-controls {
  position: absolute;
  top: 6px;
  right: 6px;
  display: flex;
  gap: 5px;
}
.doc-controls svg {
  display: block;
  width: 7px;
  height: 7px;
}
.view-cube {
  position: absolute;
  top: 17px;
  right: 2px;
  display: flex;
  flex-direction: column;
  align-items: center;
  gap: 5px;
  width: 70px;
}
.view-cube svg {
  width: 70px;
  height: 67px;
}
.cube-text {
  font-size: 14px;
  font-weight: bold;
  fill: #444;
}
.cube-text .face {
  font-size: 10px;
}
.cube-text .compass {
  font-size: 26px;
  fill: #e6e8ea;
}
.wcs {
  position: relative;
  width: 28px;
  height: 10px;
  margin-left: -2px;
  color: #3b3f48;
  background-color: #b9bcc6;
  border: 1px solid #d2d4dc;
  border-radius: 2px;
}
select {
  display: block;
  appearance: none;
  width: 100%;
  outline: none;
}
.wcs select {
  padding-left: 2px;
  line-height: 8px;
}
.wcs::after, .pick::after {
  content: "";
  position: absolute;
  top: 3px;
  right: 3px;
  border: 2px solid transparent;
  border-top: 3px solid #eee;
  border-bottom: none;
  pointer-events: none;
}

/* Command line */
.command {
  position: absolute;
  left: 233px;
  bottom: 0;
  width: 333px;
  font-family: "Liberation Mono", monospace;
}
.history {
  display: flex;
  flex-direction: column;
  align-items: flex-start;
  gap: 1px;
  margin: 0 0 1px 34px;
  line-height: 8px;
}
.history span {
  padding: 0 1px;
  background-color: #5a5c5e;
}
.command-line {
  display: flex;
  align-items: center;
  gap: 3px;
  height: 15px;
  padding-left: 2px;
  background: linear-gradient(#636363, #444);
  border: 1px solid #333;
  border-right: none;
}
.command-line svg {
  display: block;
  width: 9px;
  height: 9px;
}
.grip {
  width: 3px;
  height: 10px;
  border: 1px solid #999;
  border-width: 0 1px;
}
.prompt {
  display: flex;
  flex: 1;
  align-items: center;
  gap: 2px;
  height: 14px;
  padding: 0 2px;
  background-color: #b9bbbd;
}
.prompt .caret {
  border-top-color: #555;
}
.prompt input {
  flex: 1;
  padding-left: 2px;
  color: #333;
}
.prompt input::placeholder {
  color: #707276;
  font-style: italic;
  opacity: 1;
}
.expand {
  width: 4px;
  border: 2px solid transparent;
  border-bottom: 3px solid #222;
  border-top: none;
}

/* Footer */
.footer {
  display: flex;
  justify-content: space-between;
  height: 17px;
  background-color: #343434;
  border-bottom: 1px solid #777;
}
.layout-tabs {
  display: flex;
  gap: 1px;
  padding-left: 7px;
}
.layout-tabs a, .layout-tabs button {
  width: 37px;
  height: 11px;
  text-align: center;
  line-height: 11px;
  color: #b4b4b4;
  background-color: #505050;
  clip-path: polygon(0 0, 100% 0, 33px 100%, 4px 100%);
}
.layout-tabs .current {
  width: 34px;
  color: #fff;
  font-weight: bold;
  background-color: #767676;
  clip-path: polygon(0 0, 100% 0, 30px 100%, 4px 100%);
}
.layout-tabs button {
  width: 14px;
  margin-left: 2px;
  clip-path: polygon(4px 0, 100% 0, 10px 100%, 0 100%);
}
.status {
  display: flex;
  background: linear-gradient(#4e4e4e, #454545);
}
.group {
  display: flex;
  align-items: center;
  box-shadow: inset 1px 0 #6c6c6c;
}
.model {
  width: 29px;
  color: #fff;
}
.st {
  display: flex;
  align-items: center;
  justify-content: center;
  width: 15px;
}
.st svg {
  width: 10px;
  height: 10px;
}
.st.on {
  color: #3d8ae6;
}
.st.dim {
  color: #999;
}
.drop {
  width: 8px;
  height: 10px;
}
.drop::before {
  content: "";
  display: block;
  width: 0;
  margin: 3px auto 0;
  border: 2px solid transparent;
  border-top: 3px solid #f2f2f2;
  border-bottom: none;
}
.hw {
  background-color: #2c4668;
}
.pick {
  position: relative;
}
.scale {
  width: 22px;
}
.scale select {
  padding-left: 2px;
}
.units {
  width: 43px;
}
.units select {
  padding-left: 2px;
  color: #fff;
}
```
